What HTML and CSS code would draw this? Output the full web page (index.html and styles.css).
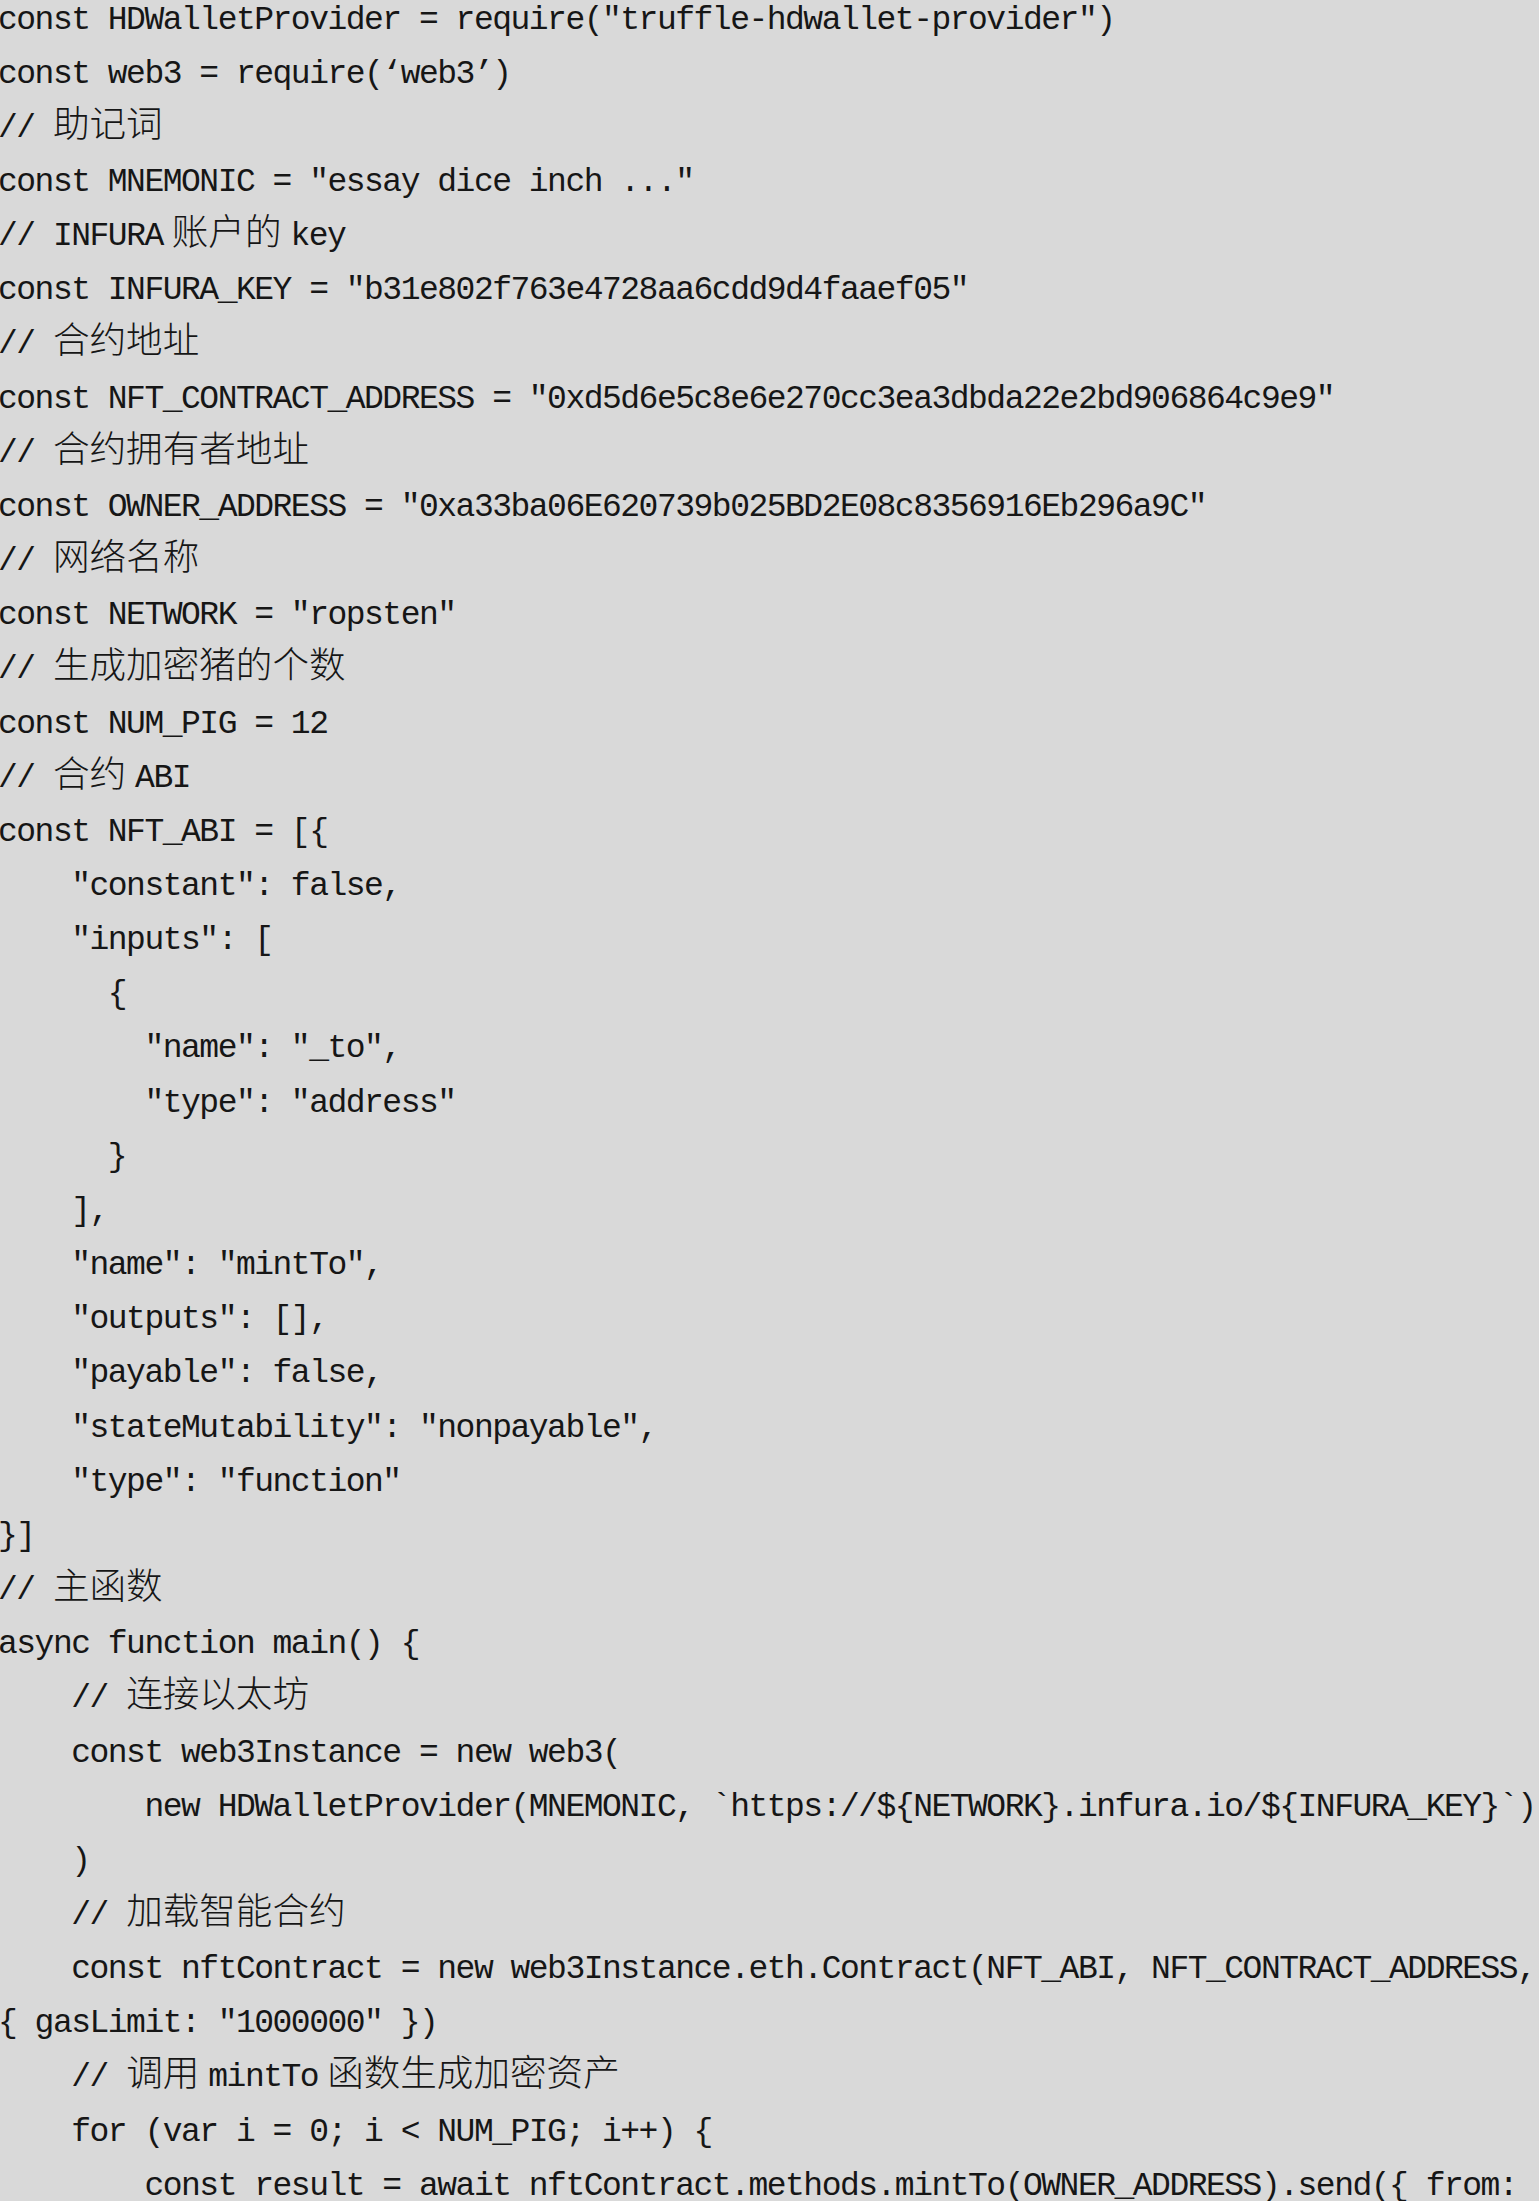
FILE: index.html
```html
<!DOCTYPE html>
<html lang="zh-CN">
<head>
<meta charset="utf-8">
<title>mint script</title>
<link rel="stylesheet" href="styles.css">
</head>
<body>
<div class="code">
<div class="ln">const HDWalletProvider = require("truffle-hdwallet-provider")</div>
<div class="ln">const web3 = require(‘web3’)</div>
<div class="ln">// <span class="zh">助记词</span></div>
<div class="ln">const MNEMONIC = "essay dice inch ..."</div>
<div class="ln">// <span class="gr">INFURA</span><span class="zh">账户的</span><span class="gl">key</span></div>
<div class="ln">const INFURA_KEY = "b31e802f763e4728aa6cdd9d4faaef05"</div>
<div class="ln">// <span class="zh">合约地址</span></div>
<div class="ln">const NFT_CONTRACT_ADDRESS = "0xd5d6e5c8e6e270cc3ea3dbda22e2bd906864c9e9"</div>
<div class="ln">// <span class="zh">合约拥有者地址</span></div>
<div class="ln">const OWNER_ADDRESS = "0xa33ba06E620739b025BD2E08c8356916Eb296a9C"</div>
<div class="ln">// <span class="zh">网络名称</span></div>
<div class="ln">const NETWORK = "ropsten"</div>
<div class="ln">// <span class="zh">生成加密猪的个数</span></div>
<div class="ln">const NUM_PIG = 12</div>
<div class="ln">// <span class="zh">合约</span><span class="gl">ABI</span></div>
<div class="ln">const NFT_ABI = [{</div>
<div class="ln">    "constant": false,</div>
<div class="ln">    "inputs": [</div>
<div class="ln">      {</div>
<div class="ln">        "name": "_to",</div>
<div class="ln">        "type": "address"</div>
<div class="ln">      }</div>
<div class="ln">    ],</div>
<div class="ln">    "name": "mintTo",</div>
<div class="ln">    "outputs": [],</div>
<div class="ln">    "payable": false,</div>
<div class="ln">    "stateMutability": "nonpayable",</div>
<div class="ln">    "type": "function"</div>
<div class="ln">}]</div>
<div class="ln">// <span class="zh">主函数</span></div>
<div class="ln">async function main() {</div>
<div class="ln">    // <span class="zh">连接以太坊</span></div>
<div class="ln">    const web3Instance = new web3(</div>
<div class="ln">        new HDWalletProvider(MNEMONIC, `https://${NETWORK}.infura.io/${INFURA_KEY}`)</div>
<div class="ln">    )</div>
<div class="ln">    // <span class="zh">加载智能合约</span></div>
<div class="ln">    const nftContract = new web3Instance.eth.Contract(NFT_ABI, NFT_CONTRACT_ADDRESS,</div>
<div class="ln">{ gasLimit: "1000000" })</div>
<div class="ln">    // <span class="zh">调用</span><span class="gl gr">mintTo</span><span class="zh">函数生成加密资产</span></div>
<div class="ln">    for (var i = 0; i &lt; NUM_PIG; i++) {</div>
<div class="ln">        const result = await nftContract.methods.mintTo(OWNER_ADDRESS).send({ from:</div>
</div>
</body>
</html>
```

FILE: styles.css
```css
html, body {
  margin: 0;
  padding: 0;
  background: #d9d9d9;
}

body {
  overflow: hidden;
  width: 1539px;
  height: 2201px;
}

.code {
  margin-top: -6.5px;
  margin-left: -2px;
  font-family: "Liberation Mono", "Noto Sans CJK SC", monospace;
  font-size: 33px;
  letter-spacing: -1.5px;
  line-height: 54.17px;
  color: #161616;
}

.ln {
  white-space: pre;
  height: 54.17px;
}

.zh {
  font-family: "Noto Sans CJK SC", "Noto Sans CJK JP", sans-serif;
  font-size: 36.6px;
  letter-spacing: 0;
  line-height: 0;
  font-weight: 300;
}

.gl {
  margin-left: 9px;
}

.gr {
  margin-right: 9px;
}
```
